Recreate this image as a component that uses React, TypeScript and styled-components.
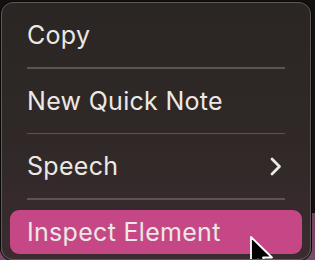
import { createGlobalStyle } from 'styled-components';
import styled from 'styled-components';

const GlobalStyle = createGlobalStyle`
  html, body {
    margin: 0;
    padding: 0;
    width: 315px;
    height: 260px;
    overflow: hidden;
    background: linear-gradient(to bottom, #121010 0%, #121010 82%, #6e4560 82%, #7a4c68 100%);
  }
`;

type Item = { label: string; submenu?: boolean; active?: boolean };

const items: Item[] = [
  { label: 'Copy' },
  { label: 'New Quick Note' },
  { label: 'Speech', submenu: true },
  { label: 'Inspect Element', active: true },
];

function Chevron() {
  return (
    <svg width="12" height="19" viewBox="0 0 12 19" fill="none">
      <path
        d="M2 2 L9.5 9.5 L2 17"
        stroke="#ece8e5"
        strokeWidth="2.8"
        strokeLinecap="round"
        strokeLinejoin="round"
      />
    </svg>
  );
}

function Pointer() {
  return (
    <svg width="30" height="40" viewBox="0 0 30 40">
      <path
        d="M2 1 L2 30 L9 23.5 L14 35 L19 33 L14 21.5 L23 21.5 Z"
        fill="#000"
        stroke="#fff"
        strokeWidth="1.8"
        strokeLinejoin="round"
      />
    </svg>
  );
}

export default function App() {
  return (
    <>
      <GlobalStyle />
      <Menu>
        {items.map((item, i) => (
          <div key={item.label}>
            {i > 0 && <Separator />}
            <Row $active={item.active}>
              <Label>{item.label}</Label>
              {item.submenu && <Chevron />}
            </Row>
          </div>
        ))}
        <Cursor>
          <Pointer />
        </Cursor>
      </Menu>
    </>
  );
}

const Menu = styled.div`
  position: relative;
  box-sizing: border-box;
  margin: 2px 0 0 1px;
  width: 310px;
  height: 258px;
  border-radius: 12px;
  border: 1px solid #5e5856;
  box-shadow: 0 0 0 1px #0a0909;
  background: linear-gradient(to bottom, #2b2624 0%, #2e2826 45%, #3b2b30 100%);
  font-family: 'Inter', 'Liberation Sans', sans-serif;
  overflow: hidden;
`;

const Row = styled.div<{ $active?: boolean }>`
  display: flex;
  align-items: center;
  justify-content: space-between;
  height: 44px;
  margin: 10px 8px;
  padding: 0 20px 0 17px;
  border-radius: 9px;
  background: ${(p) => (p.$active ? '#c64785' : 'transparent')};
`;

const Label = styled.span`
  font-size: 25px;
  font-weight: 400;
  color: #ece8e5;
  letter-spacing: 0.3px;
`;

const Separator = styled.div`
  height: 1.5px;
  margin: 0 25px 0 25px;
  background: #5b5452;
`;

const Cursor = styled.div`
  position: absolute;
  left: 247px;
  top: 233px;
  line-height: 0;
`;
